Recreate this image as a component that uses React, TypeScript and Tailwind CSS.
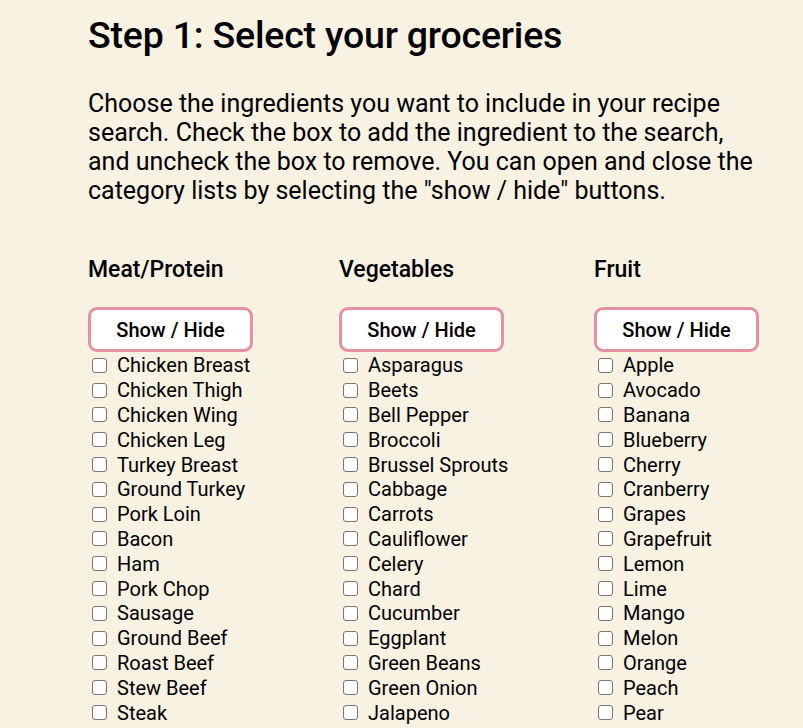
import React from 'react';

const columns: { title: string; items: string[] }[] = [
  {
    title: 'Meat/Protein',
    items: [
      'Chicken Breast',
      'Chicken Thigh',
      'Chicken Wing',
      'Chicken Leg',
      'Turkey Breast',
      'Ground Turkey',
      'Pork Loin',
      'Bacon',
      'Ham',
      'Pork Chop',
      'Sausage',
      'Ground Beef',
      'Roast Beef',
      'Stew Beef',
      'Steak',
    ],
  },
  {
    title: 'Vegetables',
    items: [
      'Asparagus',
      'Beets',
      'Bell Pepper',
      'Broccoli',
      'Brussel Sprouts',
      'Cabbage',
      'Carrots',
      'Cauliflower',
      'Celery',
      'Chard',
      'Cucumber',
      'Eggplant',
      'Green Beans',
      'Green Onion',
      'Jalapeno',
    ],
  },
  {
    title: 'Fruit',
    items: [
      'Apple',
      'Avocado',
      'Banana',
      'Blueberry',
      'Cherry',
      'Cranberry',
      'Grapes',
      'Grapefruit',
      'Lemon',
      'Lime',
      'Mango',
      'Melon',
      'Orange',
      'Peach',
      'Pear',
    ],
  },
];

const App: React.FC = () => {
  return (
    <div className="min-h-screen h-[728px] overflow-hidden bg-[#f7f2e2] text-black font-['Roboto',sans-serif]">
      <div className="pl-[88px] pr-[40px]">
        <h1 className="pt-[14px] text-[37.5px] leading-[42px] font-medium tracking-[-0.2px]">
          Step 1: Select your groceries
        </h1>
        <p className="mt-[33px] text-[25px] leading-[29px] max-w-[672px]">
          Choose the ingredients you want to include in your recipe search. Check the box to add the
          ingredient to the search, and uncheck the box to remove. You can open and close the category
          lists by selecting the "show / hide" buttons.
        </p>
        <div className="mt-[51px] grid grid-cols-[251px_255px_1fr]">
          {columns.map((col) => (
            <div key={col.title}>
              <h2 className="text-[23px] leading-[28px] font-medium">{col.title}</h2>
              <button className="mt-[23px] w-[165px] h-[45px] rounded-[9px] border-[3px] border-[#e391a3] bg-white text-[20px] font-medium">
                Show / Hide
              </button>
              <ul className="mt-[1px]">
                {col.items.map((item) => (
                  <li key={item} className="flex items-center h-[24.8px] text-[20px]">
                    <span className="ml-[4px] w-[15px] h-[15px] rounded-[3px] border border-[#767676] bg-white" />
                    <span className="ml-[10px]">{item}</span>
                  </li>
                ))}
              </ul>
            </div>
          ))}
        </div>
      </div>
    </div>
  );
};

export default App;
